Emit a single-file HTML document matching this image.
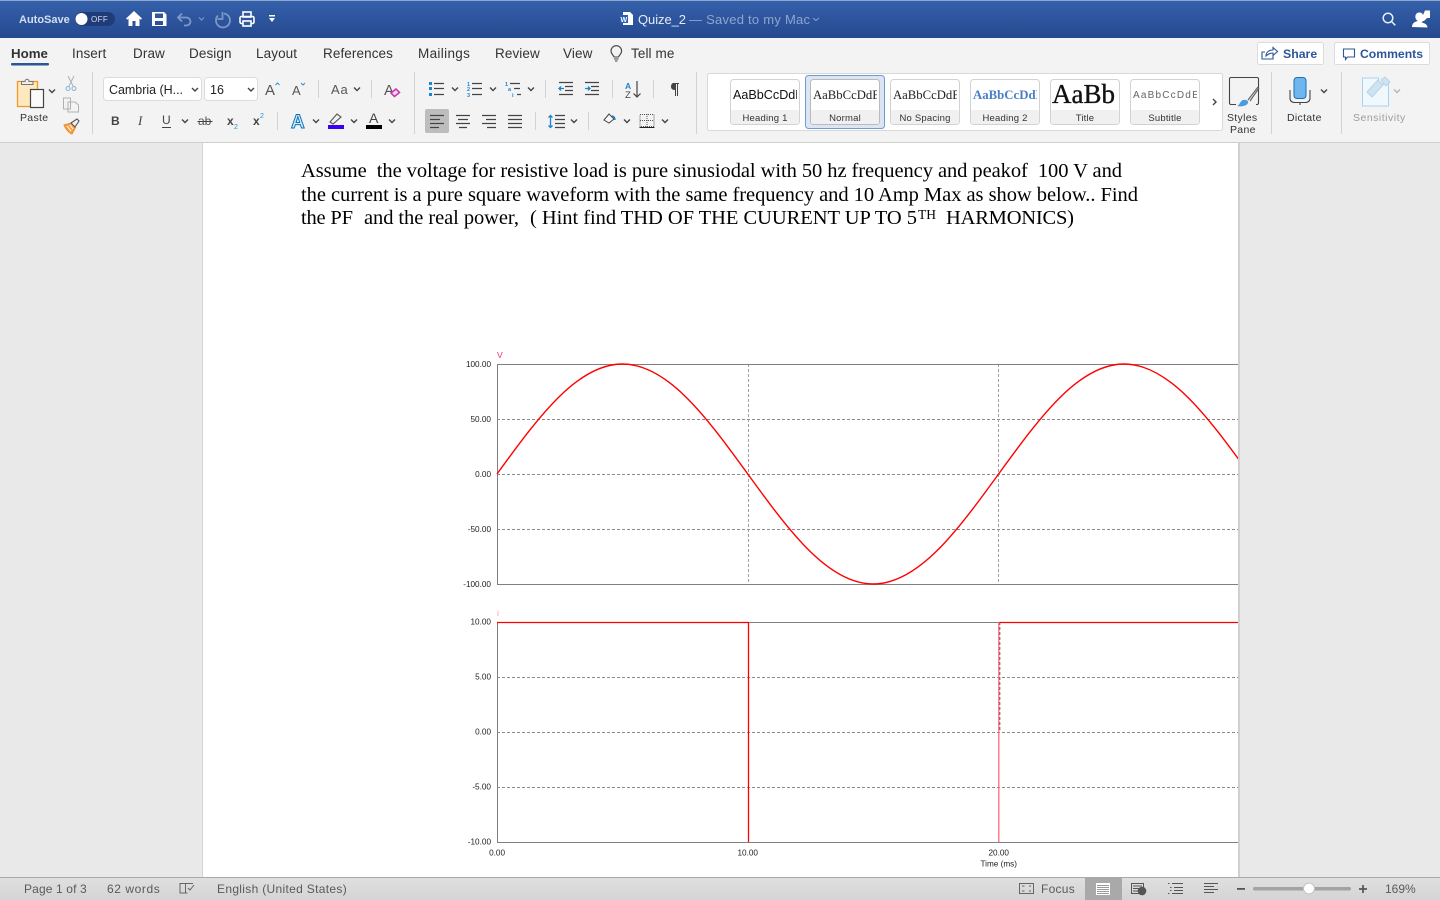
<!DOCTYPE html>
<html><head><meta charset="utf-8"><title>Quize_2</title>
<style>
html,body{margin:0;padding:0;width:1440px;height:900px;overflow:hidden;background:#e9e9e9}
svg{display:block;position:absolute;left:0;top:0}
text{font-family:"Liberation Sans",sans-serif;white-space:pre}
.tab{font-size:13.5px;fill:#333;letter-spacing:.1px}
.lb{font-size:10.5px;fill:#333;letter-spacing:.3px}
.doc{font-family:"Liberation Serif",serif;font-size:20.5px;fill:#000}
.ax{font-size:8.2px;fill:#222;text-anchor:end}
.st{font-size:12px;fill:#5a5a5a;letter-spacing:.3px}
.sty{font-size:9.5px;fill:#333;text-anchor:middle;letter-spacing:.2px}
.ch{fill:none;stroke:#444;stroke-width:1.4}
.ic{fill:none;stroke:#444;stroke-width:1.2}
.dv{stroke:#d2d2d2;stroke-width:1}
.gd{stroke:#8a8a8a;stroke-width:1;stroke-dasharray:3 2;fill:none}
</style></head><body>
<svg width="1440" height="900" viewBox="0 0 1440 900" xmlns="http://www.w3.org/2000/svg">
<defs>
<linearGradient id="tb" x1="0" y1="0" x2="0" y2="1"><stop offset="0" stop-color="#3561ab"/><stop offset="1" stop-color="#25498f"/></linearGradient>
<linearGradient id="sb" x1="0" y1="0" x2="0" y2="1"><stop offset="0" stop-color="#e0e0e0"/><stop offset="1" stop-color="#d4d4d4"/></linearGradient>
<clipPath id="pg"><rect x="203" y="143" width="1035" height="735"/></clipPath>
<symbol id="c" overflow="visible"><path class="ch" d="M-3-1.5 0 1.5 3-1.5"/></symbol>
</defs>

<!-- canvas and page -->
<rect width="1440" height="900" fill="#e9e9e9"/>
<rect x="202" y="143" width="1" height="735" fill="#d4d4d4"/>
<rect x="203" y="143" width="1035" height="735" fill="#fff"/>
<rect x="1238" y="143" width="2" height="735" fill="#d0d0d0"/>

<!-- document text -->
<text class="doc" x="301" y="177" textLength="821" lengthAdjust="spacing">Assume  the voltage for resistive load is pure sinusiodal with 50 hz frequency and peakof  100 V and</text>
<text class="doc" x="301" y="201" textLength="837" lengthAdjust="spacing">the current is a pure square waveform with the same frequency and 10 Amp Max as show below.. Find</text>
<text class="doc" x="301" y="224" textLength="52" lengthAdjust="spacing">the PF</text>
<text class="doc" x="364" y="224" textLength="155" lengthAdjust="spacing">and the real power,</text>
<text class="doc" x="530" y="224" textLength="387" lengthAdjust="spacing">( Hint find THD OF THE CUURENT UP TO 5</text>
<text class="doc" x="918" y="219" style="font-size:13.5px" textLength="18" lengthAdjust="spacing">TH</text>
<text class="doc" x="946" y="224" textLength="128" lengthAdjust="spacing">HARMONICS)</text>

<!-- chart 1 -->
<g clip-path="url(#pg)">
<path class="gd" d="M497 419.500H1238M497 474.500H1238M497 529.500H1238"/>
<path class="gd" style="stroke:#a0a0a0" d="M748.500 364V584M998.500 364V584"/>
<path fill="none" stroke="#808080" d="M497.500 584V364.500H1238M497 584.500H1238"/>
<path fill="none" stroke="#f00" stroke-width="1.400" d="M497 474C517.900 445.200 538.800 416.560 559.700 396.200C580.600 375.840 601.500 364 622.400 364C643.300 364 664.200 375.840 685.100 396.200C706 416.560 726.900 445.200 747.800 474C768.700 502.800 789.600 531.440 810.500 551.800C831.400 572.160 852.300 584 873.200 584C894.100 584 915 572.160 935.900 551.800C956.800 531.440 977.700 502.800 998.600 474C1019.500 445.200 1040.400 416.560 1061.300 396.200C1082.200 375.840 1103.100 364 1124 364C1144.900 364 1165.800 375.840 1186.700 396.200C1207.600 416.560 1228.500 445.200 1249.400 474"/>
<!-- chart 2 -->
<path class="gd" d="M497 677.500H1238M497 732.500H1238M497 787.500H1238"/>
<path class="gd" style="stroke:#555" d="M999.800 622V732"/>
<path fill="none" stroke="#808080" d="M497.500 842V622.500H1238M497 842.500H1238"/>
<path fill="none" stroke="#f00" stroke-width="1.300" d="M497 622.500H748.500V842"/>
<path fill="none" stroke="#f00" stroke-width="1.300" d="M999 622.500H1238"/>
<path fill="none" stroke="#ff6b78" stroke-width="1.300" d="M998.800 622V842"/>
</g>
<text x="497" y="358" style="font-size:8.500px" fill="#f0305a">V</text>
<text x="497" y="616" style="font-size:8.500px" fill="#ff8fb0">i</text>
<g>
<text class="ax" x="491" y="367">100.00</text><text class="ax" x="491" y="422">50.00</text><text class="ax" x="491" y="477">0.00</text><text class="ax" x="491" y="532">-50.00</text><text class="ax" x="491" y="587">-100.00</text>
<text class="ax" x="491" y="624.500">10.00</text><text class="ax" x="491" y="679.500">5.00</text><text class="ax" x="491" y="734.500">0.00</text><text class="ax" x="491" y="789.500">-5.00</text><text class="ax" x="491" y="844.500">-10.00</text>
<text class="ax" x="505" y="855.500">0.00</text><text class="ax" x="758" y="855.500">10.00</text><text class="ax" x="1009" y="855.500">20.00</text><text class="ax" x="1017" y="866.500">Time (ms)</text>
</g>

<!-- title bar -->
<rect width="1440" height="38" fill="url(#tb)"/>
<rect width="1440" height="1" fill="#8ea7cf"/>
<text x="19" y="23" style="font-size:11px;font-weight:bold" fill="#d5dff0">AutoSave</text>
<rect x="75" y="12" width="40" height="14" rx="7" fill="#1f3c78"/>
<circle cx="81.500" cy="19" r="6" fill="#fff"/>
<text x="91" y="22" style="font-size:8px" fill="#d5dff0" letter-spacing=".4">OFF</text>
<path fill="#fff" d="M134 11 126 18.500l1.200 1.200 1.300-1.200V26h4v-5h3v5h4v-7.500l1.300 1.200 1.200-1.200z"/>
<path fill="#fff" fill-rule="evenodd" d="M152 12h12l2.500 2.500V26H152zM155 13.500V18h8v-4.500zM155 21v4h8v-4z"/>
<path fill="none" stroke="#7d98c8" stroke-width="1.800" d="M182 13.500l-4 4 4 4M178 17.500h8c6 0 6 8 0 8h-2"/>
<path fill="none" stroke="#7d98c8" stroke-width="1.800" d="M218 15.500a7 7 0 1 0 6-2"/>
<path fill="none" stroke="#7d98c8" stroke-width="1.800" d="M222.500 12v7h-5"/>
<path fill="none" stroke="#7d98c8" stroke-width="1.200" d="M199 17.500l2.500 2.500 2.500-2.500"/>
<g fill="none" stroke="#fff" stroke-width="1.600"><rect x="243" y="12" width="8" height="5"/><rect x="240" y="16.500" width="14" height="7" rx="1.500"/><rect x="243" y="21" width="8" height="5" fill="#2e5aa2"/></g>
<path fill="#fff" d="M269 15h6v1.500h-6zM269 18h6l-3 4z"/>
<path fill="#fff" d="M623 12h7l3 3v10h-10z"/><rect x="620" y="15" width="8" height="8" fill="#2b5fb8"/><text x="620.500" y="22" style="font-size:7px;font-weight:bold" fill="#fff">W</text>
<text x="638" y="24" style="font-size:13px" fill="#e6ecf6" textLength="48" lengthAdjust="spacing">Quize_2</text>
<text x="689" y="24" style="font-size:13px" fill="#8ea5cd" textLength="121" lengthAdjust="spacing">— Saved to my Mac</text>
<path fill="none" stroke="#8ea5cd" d="M813 18l3 2.500 3-2.500"/>
<g fill="none" stroke="#e8eef8" stroke-width="1.500"><circle cx="1388" cy="18" r="4.800"/><path d="M1391.500 21.500l3.800 3.800"/></g>
<path fill="#fff" d="M1412 27c0-4 3-5.500 6-6-2-1-3-3-2.500-5.500.5-2 2-3 4-3s3 1 3.500 2.500l2-4.500H1430v7.500h-3l-3 3h-1c-.500.800-1 1.200-1.500 1.500 3 .5 6 2 6 5z"/>

<!-- ribbon -->
<rect y="38" width="1440" height="104" fill="#f3f3f3"/>
<rect y="142" width="1440" height="1" fill="#cfcfcf"/>
<text class="tab" x="11" y="58" style="font-weight:bold;font-size:13.300px;letter-spacing:0">Home</text>
<rect x="11" y="63" width="38" height="2.500" rx="1" fill="#2b579a"/>
<text class="tab" x="72" y="58">Insert</text><text class="tab" x="133" y="58">Draw</text><text class="tab" x="189" y="58">Design</text><text class="tab" x="256" y="58">Layout</text><text class="tab" x="323" y="58" textLength="70" lengthAdjust="spacing">References</text><text class="tab" x="418" y="58" textLength="52" lengthAdjust="spacing">Mailings</text><text class="tab" x="495" y="58">Review</text><text class="tab" x="563" y="58">View</text><text class="tab" x="631" y="58">Tell me</text>
<path fill="none" stroke="#444" stroke-width="1.100" d="M614 57c-.5-2-3-3-3-6a5.300 5.300 0 0 1 10.600 0c0 3-2.500 4-3 6zM614 59h4.500M615 61h2.500"/>
<rect x="1257.500" y="42.500" width="66" height="22" rx="2" fill="#fff" stroke="#dcdcdc"/>
<rect x="1334.500" y="42.500" width="95" height="22" rx="2" fill="#fff" stroke="#dcdcdc"/>
<path fill="none" stroke="#2b579a" stroke-width="1.100" d="M1273 55v4h-11v-7h3M1266 56c0-4 3-6 7-6v-2.500l4.500 4-4.500 4V53c-3 0-5 1-7 3z"/>
<text x="1283" y="58" style="font-size:12.300px;font-weight:bold" fill="#2b579a">Share</text>
<path fill="none" stroke="#2b579a" stroke-width="1.100" d="M1343.500 49h11v8h-7l-2 2.500V57h-2z"/>
<text x="1360" y="58" style="font-size:12.200px;font-weight:bold" fill="#2b579a">Comments</text>

<!-- clipboard -->
<rect x="17.500" y="81.500" width="20" height="25" fill="#fde9bd" stroke="#f09a2c" stroke-width="1.300"/>
<path fill="#eee" stroke="#777" d="M21.500 84.500v-3h3.500c0-3 4-3 4 0h4v3z"/>
<rect x="30.500" y="89.500" width="13" height="18" fill="#fafafa" stroke="#444" stroke-width="1.200"/>
<use href="#c" x="52" y="91"/>
<text class="lb" x="20" y="121">Paste</text>
<g fill="none" stroke="#b0b0b0" stroke-width="1"><path d="M68 76l5 10M74 76l-5 10"/><circle cx="68" cy="88.500" r="2" stroke="#7db5dd"/><circle cx="74" cy="88.500" r="2" stroke="#7db5dd"/><path d="M63.500 98h7v11h-7zM68 102h7l3.500 3v7h-10.500z" fill="#f3f3f3"/></g>
<path fill="#f7a24b" stroke="#f08a1e" d="M64 125l7-2 4.500 4.500-3.500 6.500c-2-.5-6-4-8-9z"/><path stroke="#fff" d="M67 126l4 5M70 125l3 4"/><path fill="#f3f3f3" stroke="#555" stroke-width="1.100" d="M71 123l6-4 2 2-4 6z"/>
<path class="dv" d="M92.500 72V134M318.500 80V98M371.500 80V98M414.500 72V134M277.500 112V130M545.500 80V98M612.500 80V98M653.500 80V98M535.500 112V130M588.500 112V130M696.500 72V134M1271.500 72V134M1341.500 72V134"/>

<!-- font controls -->
<rect x="103.500" y="77.500" width="98" height="23" rx="3" fill="#fff" stroke="#dcdcdc"/>
<rect x="204.500" y="77.500" width="53" height="23" rx="3" fill="#fff" stroke="#dcdcdc"/>
<text x="109" y="94" style="font-size:12.500px" fill="#222" textLength="74" lengthAdjust="spacing">Cambria (H...</text>
<text x="210" y="94" style="font-size:12.500px" fill="#222">16</text>
<use href="#c" x="195" y="89.500"/><use href="#c" x="251" y="89.500"/>
<text x="265" y="95" style="font-size:15px" fill="#555">A</text>
<path fill="none" stroke="#2a93d5" d="M275.500 85l2-2 2 2"/>
<text x="292" y="95" style="font-size:13px" fill="#555">A</text>
<path fill="none" stroke="#2a93d5" d="M301 83l2 2 2-2"/>
<text x="331" y="94" style="font-size:13px" fill="#555" letter-spacing=".8">Aa</text><use href="#c" x="357" y="89"/>
<text x="384" y="95" style="font-size:15px" fill="#555">A</text>
<path fill="#f3d6f0" stroke="#c431b0" stroke-width="1.500" d="M391 93l5-4 3.500 3.500-5 4z"/>

<text x="111" y="125" style="font-size:12px;font-weight:bold" fill="#444">B</text>
<text x="138" y="125" style="font-size:13px;font-style:italic;font-family:'Liberation Serif',serif" fill="#444">I</text>
<text x="162" y="124" style="font-size:12px" fill="#444">U</text><path stroke="#444" d="M162 127.500h9"/><use href="#c" x="185" y="121"/>
<text x="198" y="125" style="font-size:12px" fill="#555">ab</text><path stroke="#444" d="M197.500 121.500h15"/>
<text x="227" y="125" style="font-size:12px;font-weight:bold" fill="#444">x</text><text x="234" y="129" style="font-size:7px" fill="#2a93d5">2</text>
<text x="253" y="125" style="font-size:12px;font-weight:bold" fill="#444">x</text><text x="260" y="118" style="font-size:7px" fill="#2a93d5">2</text>
<text x="291" y="128" style="font-size:19px;font-weight:bold" fill="#d7ecfa" stroke="#0a72b8" stroke-width="1">A</text><use href="#c" x="316" y="121"/>
<path fill="none" stroke="#555" stroke-width="1.100" d="M330 122l7-8 4 3-8 7z"/><rect x="328" y="125" width="16" height="4" fill="#3c00f0"/><use href="#c" x="354" y="121"/>
<text x="369" y="123" style="font-size:14px" fill="#444">A</text><rect x="366" y="125" width="16" height="4" fill="#000"/><use href="#c" x="392" y="121"/>

<!-- paragraph row 1 -->
<g fill="#1a86d0"><rect x="429" y="82" width="3" height="3"/><rect x="429" y="87" width="3" height="3"/><rect x="429" y="93" width="3" height="3"/></g>
<path class="ic" d="M434 83.500h10M434 88.500h10M434 94.500h10"/><use href="#c" x="455" y="89"/>
<text x="467" y="86" style="font-size:5.500px;font-weight:bold" fill="#1a86d0">1</text><text x="467" y="91" style="font-size:5.500px;font-weight:bold" fill="#1a86d0">2</text><text x="467" y="97" style="font-size:5.500px;font-weight:bold" fill="#1a86d0">3</text>
<path class="ic" d="M472 83.500h10M472 88.500h10M472 94.500h10"/><use href="#c" x="493" y="89"/>
<text x="505" y="86" style="font-size:5.500px;font-weight:bold" fill="#1a86d0">1</text><text x="508" y="91" style="font-size:5.500px;font-weight:bold" fill="#1a86d0">a</text><text x="512" y="97" style="font-size:5.500px;font-weight:bold" fill="#1a86d0">i</text>
<path class="ic" d="M510 83.500h10M514 88.500h6M517 94.500h4"/><use href="#c" x="531" y="89"/>
<path class="ic" d="M559 82.500h14M565 86.500h8M565 90.500h8M559 94.500h14"/><path fill="none" stroke="#1a86d0" stroke-width="1.300" d="M564 88.500h-5m2-2-2 2 2 2"/>
<path class="ic" d="M585 82.500h14M591 86.500h8M591 90.500h8M585 94.500h14"/><path fill="none" stroke="#1a86d0" stroke-width="1.300" d="M585 88.500h5m-2-2 2 2-2 2"/>
<text x="625" y="89" style="font-size:8.500px;font-weight:bold" fill="#1a86d0">A</text><text x="625" y="98" style="font-size:9.500px" fill="#444">Z</text>
<path class="ic" d="M637 81v16m-3.500-3.500 3.500 3.500 3.500-3.500"/>
<path fill="#444" d="M672 83h7v1h-1v12h-1V84h-1v12h-1v-6c-3 0-4-1.500-4-3.500s1.500-3.500 2-3.500z"/>

<!-- paragraph row 2 -->
<rect x="425" y="109" width="24" height="24" rx="2" fill="#bdbdbd"/>
<path class="ic" d="M430 115.500h14M430 119.500h10M430 123.500h14M430 127.500h9"/>
<path class="ic" d="M456 115.500h14M458 119.500h10M456 123.500h14M459 127.500h8"/>
<path class="ic" d="M482 115.500h14M486 119.500h10M482 123.500h14M487 127.500h9"/>
<path class="ic" d="M508 115.500h14M508 119.500h14M508 123.500h14M508 127.500h14"/>
<path fill="none" stroke="#1a86d0" stroke-width="1.300" d="M550.500 115v13m-2-10.500 2-2 2 2m-4 8 2 2 2-2"/>
<path class="ic" d="M555 115.500h10M555 119.500h10M555 123.500h10M555 127.500h10"/><use href="#c" x="574" y="121"/>
<path fill="#f8f8f8" stroke="#444" d="M604 120l5-6 5 5-5 4z"/><path fill="none" stroke="#1a86d0" stroke-width="1.500" d="M612 116c2 .5 3 2 3 4"/><use href="#c" x="627" y="121"/>
<path fill="none" stroke="#555" stroke-dasharray="1 1" d="M640 114.500h14v12h-14zM640 120.500h14M647 114v13"/><path stroke="#222" d="M639.500 127.500h15"/><use href="#c" x="665" y="121"/>

<!-- style gallery -->
<rect x="707.500" y="73.500" width="515" height="57" rx="2" fill="#fff" stroke="#d8d8d8"/>
<rect x="805.500" y="75.500" width="79" height="53" rx="3" fill="#dce6f3" stroke="#6f9bd0"/>
<g fill="#fff" stroke="#d2d2d2">
<rect x="730.500" y="79.500" width="69" height="45" rx="3"/><rect x="810.500" y="79.500" width="69" height="45" rx="3" stroke="#bbb"/><rect x="890.500" y="79.500" width="69" height="45" rx="3"/><rect x="970.500" y="79.500" width="69" height="45" rx="3"/><rect x="1050.500" y="79.500" width="69" height="45" rx="3"/><rect x="1130.500" y="79.500" width="69" height="45" rx="3"/>
</g>
<g fill="#f0f0f0"><rect x="731" y="110" width="68" height="14" rx="2"/><rect x="811" y="110" width="68" height="14" rx="2"/><rect x="891" y="110" width="68" height="14" rx="2"/><rect x="971" y="110" width="68" height="14" rx="2"/><rect x="1051" y="110" width="68" height="14" rx="2"/><rect x="1131" y="110" width="68" height="14" rx="2"/></g>
<svg x="733" y="80" width="64" height="30"><text x="0" y="19" style="font-size:12.600px" fill="#111">AaBbCcDdE</text></svg>
<svg x="813" y="80" width="64" height="30"><text x="0" y="19" style="font-size:12.700px;font-family:'Liberation Serif',serif" fill="#222">AaBbCcDdE</text></svg>
<svg x="893" y="80" width="64" height="30"><text x="0" y="19" style="font-size:12.700px;font-family:'Liberation Serif',serif" fill="#222">AaBbCcDdE</text></svg>
<svg x="973" y="80" width="64" height="30"><text x="0" y="19" style="font-size:12.800px;font-weight:bold;font-family:'Liberation Serif',serif" fill="#4a7fc4">AaBbCcDdE</text></svg>
<svg x="1052" y="80" width="66" height="30"><text x="0" y="23" style="font-size:27px;font-family:'Liberation Serif',serif" fill="#111" stroke="#111" stroke-width=".35">AaBb</text></svg>
<svg x="1133" y="80" width="64" height="30"><text x="0" y="18" style="font-size:10px;letter-spacing:1.200px" fill="#666">AaBbCcDdEe</text></svg>
<text class="sty" x="765" y="121">Heading 1</text><text class="sty" x="845" y="121">Normal</text><text class="sty" x="925" y="121">No Spacing</text><text class="sty" x="1005" y="121">Heading 2</text><text class="sty" x="1085" y="121">Title</text><text class="sty" x="1165" y="121">Subtitle</text>
<path class="ch" d="M1213 99l3 3-3 3"/>

<!-- right tools -->
<path fill="none" stroke="#444" stroke-width="1.100" d="M1250 77.500h-19a1.500 1.500 0 0 0-1.500 1.500v24a1.500 1.500 0 0 0 1.500 1.500h5M1256 104.500h1a1.500 1.500 0 0 0 1.500-1.500v-24a1.500 1.500 0 0 0-1.500-1.500h-7"/>
<path fill="none" stroke="#666" stroke-width="1.200" d="M1258 87l-10 13M1259 88l-9 13"/>
<path fill="#4a9be0" d="M1237 106c3-1 3-5 6-6 3-1 6 1 5 3-1 3-7 4-11 3z"/>
<text class="lb" x="1227" y="121">Styles</text><text class="lb" x="1230" y="133">Pane</text>
<rect x="1294" y="77.500" width="12" height="21" rx="3" fill="#6fb6ee" stroke="#1a70b8"/>
<path fill="none" stroke="#444" stroke-width="1.100" d="M1290 90v8c0 3 2 4.500 5 4.500h10c3 0 5-1.500 5-4.500v-8M1300 102.500v2.500"/>
<text class="lb" x="1287" y="121">Dictate</text><use href="#c" x="1324" y="91"/>
<path fill="#f0f7fd" stroke="#a5d4f2" d="M1362.500 78h16v6l10 0v22h-26z"/>
<path fill="#cfe4f3" stroke="#b8d3e6" d="M1367 92l11-12 5 5-11 12zM1381 80l4-3 5 5-4 4z"/>
<text x="1353" y="121" style="font-size:10.500px;letter-spacing:.5px" fill="#9d9d9d">Sensitivity</text>
<path fill="none" stroke="#b5b5b5" stroke-width="1.400" d="M1394 89.500l3 3 3-3"/>

<!-- status bar -->
<rect y="877" width="1440" height="23" fill="url(#sb)"/>
<rect y="877" width="1440" height="1" fill="#a8a8a8"/>
<text class="st" x="24" y="893" textLength="63" lengthAdjust="spacing">Page 1 of 3</text><text class="st" x="107" y="893" textLength="53" lengthAdjust="spacing">62 words</text><text class="st" x="217" y="893" textLength="130" lengthAdjust="spacing">English (United States)</text>
<path fill="none" stroke="#666" d="M180 883.500h5.500v9.500H180zM185.500 893h2M186 883.500h7M188 888l2 2 4-5"/>
<path fill="none" stroke="#666" d="M1019.500 883.500h14v10h-14zM1022 886h2.500M1031 886h-2M1022 891h2.500M1031 891h-2"/>
<text class="st" x="1041" y="893" textLength="34" lengthAdjust="spacing">Focus</text>
<rect x="1085" y="878" width="37" height="22" fill="#a9a9a9"/>
<path fill="#fff" d="M1096 883h14v12h-14z"/><path stroke="#999" d="M1097 885.500h12M1097 887.500h12M1097 889.500h12M1097 891.500h12M1097 893.500h12"/>
<path fill="none" stroke="#555" d="M1131.500 883.500h12v10h-12zM1133 886h9M1133 888.500h9M1133 891h5"/><circle cx="1142" cy="891" r="4.300" fill="#555"/>
<path stroke="#555" d="M1168 883.500h1.500M1172 883.500h11M1170 887.500h1.500M1174 887.500h9M1170 890.500h1.500M1174 890.500h9M1168 893.500h1.500M1172 893.500h11"/>
<path stroke="#555" d="M1204 883.500h14M1204 886.500h10M1204 889.500h14M1204 892.500h10"/>
<rect x="1237" y="888" width="8" height="1.800" fill="#555"/>
<rect x="1253" y="887" width="98" height="3.500" rx="1.750" fill="#a3a3a3"/>
<circle cx="1309" cy="888.500" r="5.500" fill="#fff" stroke="#c4c4c4"/>
<path stroke="#555" stroke-width="1.700" d="M1359 889h8M1363 885v8"/>
<text class="st" x="1385" y="893" textLength="31" lengthAdjust="spacing">169%</text>
</svg>
</body></html>
